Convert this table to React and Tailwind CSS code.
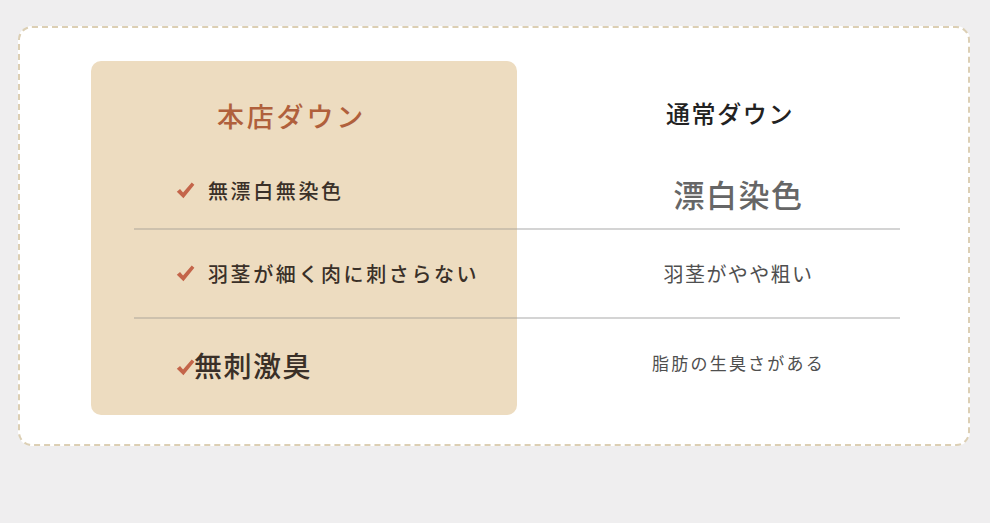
import React from "react";

const Check = ({ className = "" }) => (
  <svg viewBox="0 0 20 18" className={className} aria-hidden="true">
    <path
      d="M0.8 10.2 L4.2 7.4 L7.4 11 L16.6 0.6 L19.4 2.8 L7.8 17.2 Z"
      fill="#c4654a"
    />
  </svg>
);

const rows = [
  {
    ours: "無漂白無染色",
    oursClass: "text-[20px] tracking-[2.6px] ml-[13px]",
    theirs: "漂白染色",
    theirsClass: "text-[31px] text-[#666] tracking-[1.5px] pt-2 font-medium",
    h: "h-[75px]",
  },
  {
    ours: "羽茎が細く肉に刺さらない",
    oursClass: "text-[20px] tracking-[2.6px] ml-[13px]",
    theirs: "羽茎がやや粗い",
    theirsClass: "text-[20px] text-[#4f4f4f] tracking-[1.4px]",
    h: "h-[87px]",
  },
  {
    ours: "無刺激臭",
    oursClass: "text-[28px] tracking-[1.5px] -ml-[1px] -mt-1",
    theirs: "脂肪の生臭さがある",
    theirsClass: "text-[17px] text-[#4f4f4f] tracking-[2.2px] -mt-2",
    h: "h-[96px]",
  },
];

const App = () => {
  return (
    <div
      className="w-[990px] h-[523px] bg-[#efeeef] pt-[26px] pl-[18px]"
      style={{ fontFamily: '"Noto Sans CJK JP", "Noto Sans", sans-serif' }}
    >
      <div className="w-[952px] h-[420px] bg-white border-2 border-dashed border-[#dccfb4] rounded-[14px] pt-[33px] pl-[71px] flex">
        {/* 本店 column */}
        <div className="w-[426px] h-[354px] bg-[#eddcc0] rounded-[10px] flex flex-col">
          <div className="h-[94px] pt-[37px] pl-[126px] text-[27px] font-medium text-[#b0603c] tracking-[2.8px] leading-[36px]">
            本店ダウン
          </div>
          {rows.map((r, i) => (
            <div key={r.ours} className="flex flex-col">
              <div className={`${r.h} flex items-center pl-[85px] text-[#3a3028] font-medium`}>
                <Check className="w-[19px] h-[17px] shrink-0" />
                <span className={r.oursClass}>{r.ours}</span>
              </div>
              {i < rows.length - 1 && (
                <div className="ml-[43px] h-[2px] bg-[#cdc1ad]" />
              )}
            </div>
          ))}
        </div>

        {/* 通常 column */}
        <div className="w-[443px] h-[354px] flex flex-col">
          <div className="h-[94px] pt-[35px] pl-[149px] text-[24px] font-medium text-[#222] tracking-[1.6px] leading-[34px]">
            通常ダウン
          </div>
          {rows.map((r, i) => (
            <div key={r.theirs} className="flex flex-col">
              <div className={`${r.h} flex items-center justify-center`}>
                <span className={r.theirsClass}>{r.theirs}</span>
              </div>
              {i < rows.length - 1 && (
                <div className="mr-[60px] h-[2px] bg-[#d4d4d4]" />
              )}
            </div>
          ))}
        </div>
      </div>
    </div>
  );
};

export default App;
